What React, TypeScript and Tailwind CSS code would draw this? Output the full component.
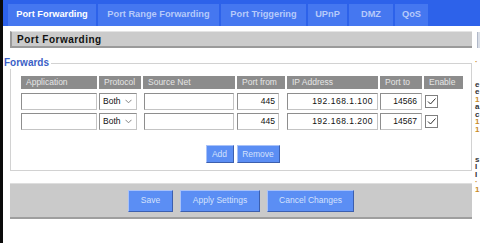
import React from "react";

const tabs: [string, number, boolean][] = [
  ["Port Forwarding", 88, true],
  ["Port Range Forwarding", 121, false],
  ["Port Triggering", 85, false],
  ["UPnP", 39, false],
  ["DMZ", 44, false],
  ["QoS", 33, false],
];

const headers = ["Application", "Protocol", "Source Net", "Port from", "IP Address", "Port to", "Enable"];

const rows = [
  { from: "445", ip: "192.168.1.100", to: "14566" },
  { from: "445", ip: "192.168.1.200", to: "14567" },
];

function Box({ className = "", children }: { className?: string; children?: React.ReactNode }) {
  return (
    <div
      className={`h-[17px] bg-white border border-[#8e8e8e] border-b-[#c4c4c4] border-r-[#c4c4c4] flex items-center text-[8.5px] text-[#111] ${className}`}
    >
      {children}
    </div>
  );
}

function Btn({ label, w, h }: { label: string; w: number; h: number }) {
  return (
    <div
      className="flex items-center justify-center bg-[#5b8ef4] text-[#d4e1fc] text-[8.5px] border border-t-[#a9c2f8] border-l-[#a9c2f8] border-b-[#3c5fae] border-r-[#3c5fae]"
      style={{ width: w, height: h }}
    >
      {label}
    </div>
  );
}

export default function App() {
  const helpChars: [string, string][] = [
    ["·", "#c98a2a"],
    ["", ""],
    ["", ""],
    ["e", "#333"],
    ["e", "#333"],
    ["1", "#c98a2a"],
    ["a", "#333"],
    ["c", "#333"],
    ["1", "#c98a2a"],
    ["1", "#c98a2a"],
    ["", ""],
    ["", ""],
    ["", ""],
    ["s", "#333"],
    ["I", "#333"],
    ["I", "#333"],
    ["·", "#c98a2a"],
    ["1", "#c98a2a"],
  ];
  return (
    <div className="w-[480px] h-[243px] overflow-hidden bg-white flex font-['Liberation_Sans',Arial,sans-serif]">
      <div className="w-[3px] h-full bg-[#0b0b0b] shrink-0" />
      <div className="flex-1 flex flex-col min-w-0">
        {/* top tab bar */}
        <div className="h-[26px] bg-[#2d62ea] flex items-end gap-[2px] pl-[5px] shrink-0">
          {tabs.map(([t, w, active]) => (
            <div
              key={t}
              className={`h-[22px] flex items-center justify-center text-[9.25px] font-bold bg-[#4577f0] ${
                active ? "text-white" : "text-[#b6cafa]"
              }`}
              style={{ width: w }}
            >
              {t}
            </div>
          ))}
        </div>

        <div className="flex flex-1 min-h-0">
          {/* main content */}
          <div className="w-[469px] shrink-0 pl-[7px] flex flex-col">
            <div className="mt-[5px] h-[17px] bg-[#cbcbcb] border-l-[2px] border-b-[2px] border-[#9a9a9a] border-t border-t-[#e4e4e4] flex items-center pl-[5px] text-[10px] font-bold tracking-[0.5px] text-[#111]">
              Port Forwarding
            </div>

            <fieldset className="mt-[9px] border border-[#d2d2d2] pl-[10px] pr-[7px] pb-[7px]">
              <legend className="-ml-[17px] text-[10px] font-bold leading-[12px] text-[#3b5fc6] pr-[2px]">
                Forwards
              </legend>
              <div className="pt-[7px] grid grid-cols-[76px_42px_92px_48px_91px_42px_39px] gap-x-[2px] gap-y-[3px]">
                {headers.map((h) => (
                  <div
                    key={h}
                    className="h-[13px] mb-[1px] bg-[#8c8c8c] text-[#e6e6e6] text-[8.5px] flex items-center pl-[5px]"
                  >
                    {h}
                  </div>
                ))}
                {rows.map((r, i) => (
                  <React.Fragment key={i}>
                    <Box className="w-[76px]" />
                    <Box className="w-[38px] justify-between pl-[3px] pr-[4px]">
                      <span>Both</span>
                      <svg width="7" height="5" viewBox="0 0 7 5">
                        <path d="M0.5 0.8 L3.5 3.8 L6.5 0.8" fill="none" stroke="#777" strokeWidth="0.9" />
                      </svg>
                    </Box>
                    <Box className="w-[90px] ml-[1px]" />
                    <Box className="w-[42px] justify-end pr-[3px]">{r.from}</Box>
                    <Box className="w-[91px] justify-end pr-[4px] tracking-[0.5px]">{r.ip}</Box>
                    <Box className="w-[42px] justify-end pr-[4px]">{r.to}</Box>
                    <div className="h-[17px] flex items-center pl-[1px]">
                      <div className="w-[13px] h-[13px] bg-white border border-[#7f7f7f] flex items-center justify-center">
                        <svg width="11" height="11" viewBox="0 0 11 11">
                          <path d="M2 5.5 L4.5 8 L9.5 2.5" fill="none" stroke="#2a2a2a" strokeWidth="1" />
                        </svg>
                      </div>
                    </div>
                  </React.Fragment>
                ))}
              </div>
              <div className="mt-[15px] flex justify-center gap-[3px]">
                <Btn label="Add" w={28} h={18} />
                <Btn label="Remove" w={43} h={18} />
              </div>
            </fieldset>

            <div className="mt-[12px] h-[36px] bg-[#cacaca] border-t border-t-[#dedede] border-b-[2px] border-b-[#9e9e9e] flex items-center justify-center gap-[7px]">
              <Btn label="Save" w={45} h={22} />
              <Btn label="Apply Settings" w={80} h={22} />
              <Btn label="Cancel Changes" w={87} h={22} />
            </div>
          </div>

          {/* help column (cut off) */}
          <div className="flex-1 overflow-hidden flex flex-col">
            <div className="mt-[6px] ml-[5px] h-[16px] bg-[#d8dde6] border-l border-[#b0b8c8]" />
            <div className="ml-[3px] mt-[10px] flex flex-col text-[8px] leading-[7.5px] font-bold">
              {helpChars.map(([c, col], i) => (
                <span key={i} className="h-[7.5px]" style={{ color: col }}>
                  {c}
                </span>
              ))}
            </div>
          </div>
        </div>
      </div>
    </div>
  );
}
